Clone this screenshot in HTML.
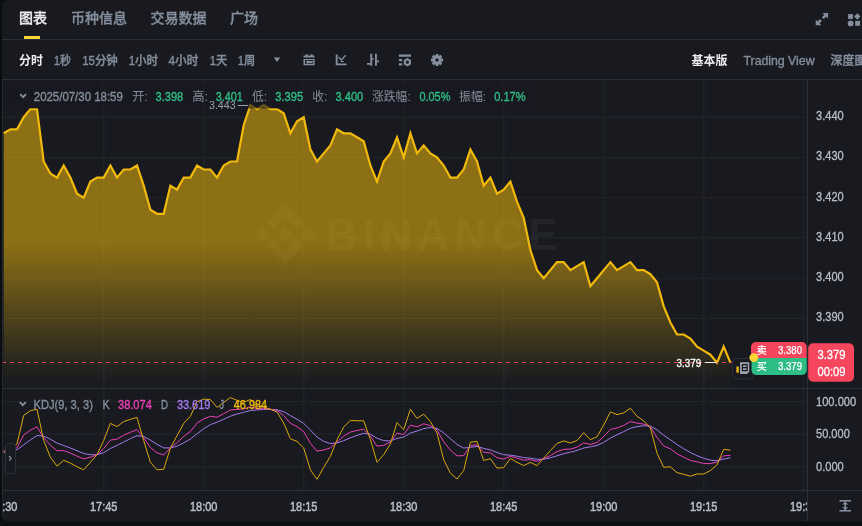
<!DOCTYPE html>
<html lang="zh-CN">
<head>
<meta charset="utf-8">
<title>图表</title>
<style>
html,body{margin:0;padding:0;background:#0b0e11;}
body{width:862px;height:526px;overflow:hidden;position:relative;}
svg{display:block;position:absolute;left:0;top:0;will-change:transform;}
text{font-family:"Liberation Sans","Noto Sans CJK SC",sans-serif;}
.t14{font-size:14px;font-weight:500;stroke-width:0.3px;}
.t14.w{stroke:#eaecef;}
.t14.g{stroke:#848e9c;}
.t12{font-size:12px;}
.m{font-weight:500;}
.sg{stroke:#848e9c;stroke-width:0.35px;}
.sgr{stroke:#2ebd85;stroke-width:0.35px;}
.b{font-weight:700;}
.g{fill:#848e9c;}
.w{fill:#eaecef;}
.gr{fill:#2ebd85;}
.ax{fill:#b7bdc6;font-size:12px;stroke:#b7bdc6;stroke-width:0.3px;}
</style>
</head>
<body>
<svg width="862" height="526" viewBox="0 0 862 526">
<defs>
<linearGradient id="af" x1="0" y1="100" x2="0" y2="380" gradientUnits="userSpaceOnUse">
<stop offset="0" stop-color="#f0b90b" stop-opacity="0.54"/>
<stop offset="0.51" stop-color="#f0b90b" stop-opacity="0.54"/>
<stop offset="1" stop-color="#f0b90b" stop-opacity="0.012"/>
</linearGradient>
<clipPath id="cp"><rect x="3" y="80" width="804" height="309"/></clipPath>
<clipPath id="cp2"><rect x="3" y="389" width="804" height="101"/></clipPath>
<clipPath id="cpt"><rect x="3" y="491" width="804" height="30"/></clipPath>
</defs>
<rect x="0" y="0" width="862" height="526" fill="#0b0e11"/>
<rect x="2" y="0" width="900" height="521.5" rx="6" fill="#181a20"/>
<!-- header borders -->
<rect x="2" y="39" width="860" height="1" fill="#2b3139"/>
<rect x="2" y="79" width="860" height="1" fill="#2b3139"/>
<!-- tabs -->
<text class="t14 w" x="19" y="22.7">图表</text>
<text class="t14 g" x="71" y="22.7">币种信息</text>
<text class="t14 g" x="150.5" y="22.7">交易数据</text>
<text class="t14 g" x="230" y="22.7">广场</text>
<rect x="24" y="36" width="16" height="3" fill="#fcd535"/>
<!-- header icons -->
<g fill="#848e9c">
<path d="M822.400 12.900h5.700v5.700l-1.900-1.900-2.400 2.400-1.900-1.900 2.400-2.400zM821.400 25.200h-5.700v-5.700l1.900 1.900 2.400-2.400 1.900 1.900-2.400 2.400z"/>
<rect x="848.100" y="14.100" width="4.800" height="4.900"/>
<path d="M857.300 13.300l3.200 3.200-3.200 3.200-3.200-3.200z"/>
<circle cx="850.600" cy="23.400" r="2.900"/>
<rect x="855.200" y="20.900" width="4.900" height="4.900"/>
</g>
<!-- interval row -->
<g class="t12 m" text-anchor="middle">
<text class="w b" x="31" y="65.4">分时</text>
<text class="g sg" x="62.4" y="65.4" textLength="17" lengthAdjust="spacingAndGlyphs">1秒</text>
<text class="g sg" x="100" y="65.4" textLength="35.6" lengthAdjust="spacingAndGlyphs">15分钟</text>
<text class="g sg" x="143.3" y="65.4" textLength="29.3" lengthAdjust="spacingAndGlyphs">1小时</text>
<text class="g sg" x="183.5" y="65.4" textLength="30" lengthAdjust="spacingAndGlyphs">4小时</text>
<text class="g sg" x="218.4" y="65.4" textLength="17.4" lengthAdjust="spacingAndGlyphs">1天</text>
<text class="g sg" x="246.5" y="65.4" textLength="17.4" lengthAdjust="spacingAndGlyphs">1周</text>
<text class="w b" x="709.4" y="65.4">基本版</text>
<text class="g sg" x="779" y="65.4" textLength="71" lengthAdjust="spacingAndGlyphs">Trading View</text>
<text class="g sg" x="848.4" y="65.4">深度图</text>
</g>
<path d="M273.800 57.500h6.400l-3.200 4.600z" fill="#848e9c"/>
<!-- toolbar icons -->
<g fill="#848e9c" id="tbicons">
<!-- icon1 -->
<path d="M305.6 54.3h2.1v1.4h-2.1zM310.6 54.3h2.1v1.4h-2.1zM303.5 55.6h11.1v2h-11.1z"/>
<path d="M303.5 59h11.100v6.200h-11.100zM305 60.100v3.600h8.100v-3.600z" fill-rule="evenodd"/>
<path d="M305.600 61.900l2.600-2v1h4.400v2h-4.400v1z"/>
<!-- icon2 -->
<path d="M335.700 54.500h1.900v9h8.800v1.800h-10.700z"/>
<path d="M338.500 57l2.900 3 4.200-4.700" fill="none" stroke="#848e9c" stroke-width="1.300"/>
<path d="M340.600 61h3.200v1h-3.200z"/>
<!-- icon3 -->
<path d="M370.300 53.700h1.900v12h-1.900zM375 53.700h1.900v12h-1.900zM367 63.100h3.400v1.700h-3.400zM376.800 60.500h2.300v1.700h-2.300zM372 58.300h1.600v1.700h-1.600z"/>
<!-- icon4 -->
<path d="M398.900 54.600h12.100v2.100h-12.100zM398.900 59.100h3.300v2.100h-3.300zM398.900 63.300h3.300v2.100h-3.300z"/>
<path d="M407.400 58l3.600 2.100v4.200l-3.600 2.100-3.600-2.100v-4.200zM407.400 60.500l-1.500 .9v1.700l1.500 .9 1.500-.9v-1.700z" fill-rule="evenodd"/>
</g>
<!-- gear -->
<g transform="translate(437 60)">
<g fill="#848e9c">
<rect x="-1.400" y="-6.100" width="2.800" height="12.200" rx="0.500"/>
<rect x="-1.400" y="-6.100" width="2.800" height="12.200" rx="0.500" transform="rotate(45)"/>
<rect x="-1.400" y="-6.100" width="2.800" height="12.200" rx="0.500" transform="rotate(90)"/>
<rect x="-1.400" y="-6.100" width="2.800" height="12.200" rx="0.500" transform="rotate(135)"/>
<circle r="4.800"/>
</g>
<path d="M0-2l2 2-2 2-2-2z" fill="#181a20"/>
</g>

<rect x="2" y="80" width="1" height="438" fill="#252a32"/>
<!-- grid -->
<g fill="#22262c">
<rect x="103.4" y="80" width="1" height="410"/>
<rect x="203.4" y="80" width="1" height="410"/>
<rect x="303.4" y="80" width="1" height="410"/>
<rect x="403.4" y="80" width="1" height="410"/>
<rect x="503.4" y="80" width="1" height="410"/>
<rect x="603.4" y="80" width="1" height="410"/>
<rect x="703.4" y="80" width="1" height="410"/>
<rect x="803.4" y="80" width="1" height="410"/>
<rect x="3" y="116.7" width="804" height="1"/>
<rect x="3" y="156.9" width="804" height="1"/>
<rect x="3" y="197.2" width="804" height="1"/>
<rect x="3" y="237.4" width="804" height="1"/>
<rect x="3" y="277.7" width="804" height="1"/>
<rect x="3" y="317.9" width="804" height="1"/>
<rect x="3" y="401.1" width="804" height="1"/>
<rect x="3" y="433.5" width="804" height="1"/>
<rect x="3" y="466.4" width="804" height="1"/>
</g>
<!-- watermark -->
<g opacity="0.045" fill="#ffffff">
<g transform="translate(254.700 203.400) scale(0.480 0.486)">
<polygon points="38.730 53.200 63.300 28.630 87.890 53.210 102.180 38.920 63.300 0 24.440 38.910"/>
<polygon points="14.290 49.010 28.580 63.300 14.290 77.590 0 63.300"/>
<polygon points="38.730 73.410 63.300 97.980 87.890 73.400 102.190 87.680 63.300 126.610 24.420 87.680"/>
<polygon points="112.320 49.010 126.610 63.300 112.320 77.590 98.030 63.300"/>
<polygon points="77.830 63.300 63.300 48.780 48.780 63.300 63.300 77.830"/>
</g>
<text x="325.800" y="250" font-size="44" font-weight="700" textLength="232" lengthAdjust="spacing">BINANCE</text>
</g>
<!-- area + line -->
<g clip-path="url(#cp)">
<path d="M3.7 133.3 L10.4 129.3 L17.0 129.3 L23.7 117.2 L30.4 109.1 L37.0 109.1 L43.7 161.5 L50.4 173.5 L57.0 177.6 L63.7 165.5 L70.4 177.6 L77.0 193.7 L83.7 197.7 L90.4 181.6 L97.0 177.6 L103.7 177.6 L110.4 165.5 L117.0 177.6 L123.7 169.5 L130.4 169.5 L137.0 165.5 L143.7 185.6 L150.4 209.8 L157.0 213.8 L163.7 213.8 L170.4 185.6 L177.0 189.6 L183.7 177.6 L190.4 177.6 L197.0 165.5 L203.7 169.5 L210.4 169.5 L217.0 177.6 L223.7 165.5 L230.4 161.5 L237.0 161.5 L243.7 125.2 L250.4 105.1 L257.0 109.1 L263.7 105.1 L270.4 109.1 L277.0 109.1 L283.7 113.2 L290.4 133.3 L297.0 121.2 L303.7 117.2 L310.4 149.4 L317.0 161.5 L323.7 153.4 L330.4 145.4 L337.0 129.3 L343.7 133.3 L350.4 133.3 L357.0 137.3 L363.7 141.3 L370.4 165.5 L377.0 181.6 L383.7 161.5 L390.4 153.4 L397.0 137.3 L403.7 157.4 L410.4 133.3 L417.0 153.4 L423.7 145.4 L430.4 153.4 L437.0 157.4 L443.7 165.5 L450.4 177.6 L457.0 177.6 L463.7 169.5 L470.4 149.4 L477.0 161.5 L483.7 185.6 L490.4 177.6 L497.0 193.7 L503.7 189.6 L510.4 181.6 L517.0 201.7 L523.7 217.8 L530.4 250.0 L537.0 270.1 L543.7 278.2 L550.4 270.1 L557.0 262.1 L563.7 262.1 L570.4 270.1 L577.0 266.1 L583.7 262.1 L590.4 286.2 L597.0 278.2 L603.7 270.1 L610.4 262.1 L617.0 270.1 L623.7 266.1 L630.4 262.1 L637.0 270.1 L643.7 270.1 L650.4 274.2 L657.0 282.2 L663.7 306.4 L670.4 322.5 L677.0 334.5 L683.7 334.5 L690.4 338.6 L697.0 346.6 L703.7 350.6 L710.4 354.7 L717.0 362.7 L723.7 346.6 L730.4 362.7 L730.4 388 L3.7 388 Z" fill="url(#af)"/>
<path d="M3.7 133.3 L10.4 129.3 L17.0 129.3 L23.7 117.2 L30.4 109.1 L37.0 109.1 L43.7 161.5 L50.4 173.5 L57.0 177.6 L63.7 165.5 L70.4 177.6 L77.0 193.7 L83.7 197.7 L90.4 181.6 L97.0 177.6 L103.7 177.6 L110.4 165.5 L117.0 177.6 L123.7 169.5 L130.4 169.5 L137.0 165.5 L143.7 185.6 L150.4 209.8 L157.0 213.8 L163.7 213.8 L170.4 185.6 L177.0 189.6 L183.7 177.6 L190.4 177.6 L197.0 165.5 L203.7 169.5 L210.4 169.5 L217.0 177.6 L223.7 165.5 L230.4 161.5 L237.0 161.5 L243.7 125.2 L250.4 105.1 L257.0 109.1 L263.7 105.1 L270.4 109.1 L277.0 109.1 L283.7 113.2 L290.4 133.3 L297.0 121.2 L303.7 117.2 L310.4 149.4 L317.0 161.5 L323.7 153.4 L330.4 145.4 L337.0 129.3 L343.7 133.3 L350.4 133.3 L357.0 137.3 L363.7 141.3 L370.4 165.5 L377.0 181.6 L383.7 161.5 L390.4 153.4 L397.0 137.3 L403.7 157.4 L410.4 133.3 L417.0 153.4 L423.7 145.4 L430.4 153.4 L437.0 157.4 L443.7 165.5 L450.4 177.6 L457.0 177.6 L463.7 169.5 L470.4 149.4 L477.0 161.5 L483.7 185.6 L490.4 177.6 L497.0 193.7 L503.7 189.6 L510.4 181.6 L517.0 201.7 L523.7 217.8 L530.4 250.0 L537.0 270.1 L543.7 278.2 L550.4 270.1 L557.0 262.1 L563.7 262.1 L570.4 270.1 L577.0 266.1 L583.7 262.1 L590.4 286.2 L597.0 278.2 L603.7 270.1 L610.4 262.1 L617.0 270.1 L623.7 266.1 L630.4 262.1 L637.0 270.1 L643.7 270.1 L650.4 274.2 L657.0 282.2 L663.7 306.4 L670.4 322.5 L677.0 334.5 L683.7 334.5 L690.4 338.6 L697.0 346.6 L703.7 350.6 L710.4 354.7 L717.0 362.7 L723.7 346.6 L730.4 362.7" fill="none" stroke="#f0b90b" stroke-width="2.2" stroke-linejoin="miter" stroke-miterlimit="10"/>
</g>
<!-- legend overlay -->
<rect x="5" y="83" width="527" height="25.5" fill="#181a20" fill-opacity="0.62"/>
<!-- high marker -->
<text x="209" y="108.5" font-size="10" fill="#9aa1ab" textLength="26.6" lengthAdjust="spacingAndGlyphs">3.443</text>
<rect x="237.7" y="105" width="10.6" height="1" fill="#9aa1ab"/>
<!-- legend text -->
<path d="M20.200 94.200l2.900 2.900 2.900-2.900" fill="none" stroke="#848e9c" stroke-width="1.900"/>
<g class="t12">
<text class="g sg" x="33.8" y="100.8" textLength="89" lengthAdjust="spacingAndGlyphs">2025/07/30 18:59</text>
<text class="g" x="132.3" y="100.8" textLength="15.7" lengthAdjust="spacingAndGlyphs">开:</text>
<text class="gr sgr" x="155.6" y="100.8" textLength="27.6" lengthAdjust="spacingAndGlyphs">3.398</text>
<text class="g" x="192.3" y="100.8" textLength="15.7" lengthAdjust="spacingAndGlyphs">高:</text>
<text class="gr sgr" x="215.7" y="100.8" textLength="27" lengthAdjust="spacingAndGlyphs">3.401</text>
<text class="g" x="252" y="100.8" textLength="15" lengthAdjust="spacingAndGlyphs">低:</text>
<text class="gr sgr" x="275.3" y="100.8" textLength="27.8" lengthAdjust="spacingAndGlyphs">3.395</text>
<text class="g" x="312.2" y="100.8" textLength="15" lengthAdjust="spacingAndGlyphs">收:</text>
<text class="gr sgr" x="335.5" y="100.8" textLength="27.8" lengthAdjust="spacingAndGlyphs">3.400</text>
<text class="g" x="372" y="100.8" textLength="38.7" lengthAdjust="spacingAndGlyphs">涨跌幅:</text>
<text class="gr sgr" x="419.4" y="100.8" textLength="31" lengthAdjust="spacingAndGlyphs">0.05%</text>
<text class="g" x="459" y="100.8" textLength="27.2" lengthAdjust="spacingAndGlyphs">振幅:</text>
<text class="gr sgr" x="494.2" y="100.8" textLength="31.3" lengthAdjust="spacingAndGlyphs">0.17%</text>
</g>
<!-- current price dashed line -->
<path d="M3 362.5H807" stroke="#f6465d" stroke-width="1.100" stroke-dasharray="4 4" stroke-dashoffset="1.100" fill="none"/>
<!-- low marker -->
<text x="676.5" y="366.7" font-size="10" fill="#ffffff" stroke="#ffffff" stroke-width="0.300" textLength="24.7" lengthAdjust="spacingAndGlyphs">3.379</text>
<rect x="704.7" y="362" width="11.8" height="1" fill="#eaecef"/>
<!-- small button -->
<rect x="732.5" y="358.5" width="20.5" height="20.5" rx="4" fill="#181a20" stroke="#2b3139" stroke-width="1"/>
<path d="M740 362.300h9.300v9.400l-2.300 2.300h-7z" fill="#9aa1ab"/>
<path d="M742.400 364.600h4.700v6h-4.700zM742.400 367.600h4.700" fill="none" stroke="#181a20" stroke-width="1.200"/>
<rect x="736.400" y="366.500" width="2.400" height="6.200" fill="#f0b90b"/>
<!-- pane divider & axes -->
<rect x="3" y="388" width="859" height="1" fill="#2b3139"/>
<rect x="3" y="490" width="859" height="1" fill="#2b3139"/>
<rect x="807" y="80" width="1" height="441" fill="#2b3139"/>
<!-- sell / buy labels -->
<path d="M756 342h46a4.700 4.700 0 0 1 4.700 4.700v11.300h-55.700v-11a5 5 0 0 1 5-5z" fill="#f6465d"/>
<path d="M751.500 358h55.200v12.300a4.700 4.700 0 0 1 -4.700 4.700h-45.800a4.700 4.700 0 0 1 -4.700-4.700z" fill="#2ebd85"/>
<g font-size="10" fill="#ffffff" stroke="#ffffff" stroke-width="0.250">
<text x="756.8" y="354">卖</text>
<text x="778" y="353.8" textLength="24" lengthAdjust="spacingAndGlyphs">3.380</text>
<text x="756.8" y="370.4">买</text>
<text x="778" y="370.2" textLength="24" lengthAdjust="spacingAndGlyphs">3.379</text>
</g>
<circle cx="753.8" cy="357.6" r="4.4" fill="#fcd535"/>
<!-- price tag -->
<rect x="808.200" y="343.200" width="45.800" height="38.600" rx="5" fill="#f6465d"/>
<g font-size="12" fill="#ffffff" text-anchor="middle" stroke="#ffffff" stroke-width="0.300">
<text x="831.5" y="359" textLength="28" lengthAdjust="spacingAndGlyphs">3.379</text>
<text x="831.5" y="375.6" textLength="28" lengthAdjust="spacingAndGlyphs">00:09</text>
</g>
<!-- price axis labels -->
<g class="ax">
<text x="816" y="120.2" textLength="27.7" lengthAdjust="spacingAndGlyphs">3.440</text>
<text x="816" y="160.4" textLength="27.7" lengthAdjust="spacingAndGlyphs">3.430</text>
<text x="816" y="200.700" textLength="27.7" lengthAdjust="spacingAndGlyphs">3.420</text>
<text x="816" y="240.900" textLength="27.7" lengthAdjust="spacingAndGlyphs">3.410</text>
<text x="816" y="281.100" textLength="27.7" lengthAdjust="spacingAndGlyphs">3.400</text>
<text x="816" y="321.400" textLength="27.7" lengthAdjust="spacingAndGlyphs">3.390</text>
<text x="816" y="406" textLength="40.2" lengthAdjust="spacingAndGlyphs">100.000</text>
<text x="816" y="438" textLength="33.8" lengthAdjust="spacingAndGlyphs">50.000</text>
<text x="816" y="471.2" textLength="27.800" lengthAdjust="spacingAndGlyphs">0.000</text>
</g>
<!-- KDJ lines -->
<g clip-path="url(#cp2)" fill="none" stroke-width="1" stroke-linejoin="round">
<path d="M3.7 451.0 L10.4 450.5 L17.0 449.7 L23.7 444.8 L30.4 439.9 L37.0 435.5 L43.7 436.2 L50.4 439.2 L57.0 443.1 L63.7 445.5 L70.4 448.0 L77.0 450.7 L83.7 453.5 L90.4 454.7 L97.0 454.7 L103.7 452.7 L110.4 448.5 L117.0 445.4 L123.7 442.0 L130.4 438.7 L137.0 435.7 L143.7 436.4 L150.4 440.1 L157.0 444.3 L163.7 447.9 L170.4 447.9 L177.0 446.2 L183.7 442.9 L190.4 439.1 L197.0 433.8 L203.7 428.8 L210.4 424.6 L217.0 422.2 L223.7 419.3 L230.4 416.2 L237.0 414.0 L243.7 412.3 L250.4 410.5 L257.0 409.9 L263.7 409.5 L270.4 409.4 L277.0 409.8 L283.7 411.7 L290.4 415.6 L297.0 419.3 L303.7 423.4 L310.4 430.0 L317.0 437.0 L323.7 441.4 L330.4 443.5 L337.0 443.0 L343.7 440.7 L350.4 437.8 L357.0 435.4 L363.7 433.3 L370.4 434.2 L377.0 438.2 L383.7 440.6 L390.4 441.0 L397.0 438.4 L403.7 437.1 L410.4 433.1 L417.0 431.0 L423.7 428.6 L430.4 427.6 L437.0 428.4 L443.7 432.9 L450.4 438.6 L457.0 444.4 L463.7 448.1 L470.4 447.3 L477.0 446.4 L483.7 448.4 L490.4 449.9 L497.0 452.5 L503.7 454.7 L510.4 455.2 L517.0 456.2 L523.7 457.6 L530.4 458.2 L537.0 459.3 L543.7 459.1 L550.4 457.9 L557.0 455.8 L563.7 453.7 L570.4 452.2 L577.0 450.5 L583.7 448.0 L590.4 446.8 L597.0 445.4 L603.7 442.4 L610.4 438.1 L617.0 434.7 L623.7 431.6 L630.4 428.3 L637.0 426.6 L643.7 425.7 L650.4 426.1 L657.0 429.9 L663.7 435.3 L670.4 439.8 L677.0 444.5 L683.7 448.7 L690.4 452.6 L697.0 455.7 L703.7 458.3 L710.4 460.1 L717.0 460.7 L723.7 459.1 L730.4 457.8" stroke="#a27aeb"/>
<path d="M3.7 450.8 L10.4 449.0 L17.0 447.8 L23.7 435.0 L30.4 430.2 L37.0 426.8 L43.7 437.7 L50.4 445.2 L57.0 450.8 L63.7 450.5 L70.4 453.1 L77.0 456.1 L83.7 458.9 L90.4 457.2 L97.0 454.7 L103.7 448.6 L110.4 440.1 L117.0 439.1 L123.7 435.2 L130.4 432.3 L137.0 429.6 L143.7 437.7 L150.4 447.5 L157.0 452.8 L163.7 455.0 L170.4 447.9 L177.0 442.7 L183.7 436.4 L190.4 431.5 L197.0 423.1 L203.7 418.9 L210.4 416.3 L217.0 417.2 L223.7 413.7 L230.4 410.0 L237.0 409.4 L243.7 409.0 L250.4 406.8 L257.0 408.6 L263.7 408.6 L270.4 409.3 L277.0 410.6 L283.7 415.5 L290.4 423.3 L297.0 426.6 L303.7 431.6 L310.4 443.3 L317.0 451.1 L323.7 450.0 L330.4 447.8 L337.0 441.9 L343.7 436.2 L350.4 432.0 L357.0 430.5 L363.7 429.1 L370.4 436.0 L377.0 446.2 L383.7 445.3 L390.4 442.0 L397.0 433.1 L403.7 434.6 L410.4 425.2 L417.0 426.8 L423.7 423.8 L430.4 425.6 L437.0 429.9 L443.7 441.8 L450.4 450.1 L457.0 455.9 L463.7 455.6 L470.4 445.6 L477.0 444.8 L483.7 452.4 L490.4 452.8 L497.0 457.7 L503.7 459.0 L510.4 456.3 L517.0 458.2 L523.7 460.2 L530.4 459.6 L537.0 461.4 L543.7 458.8 L550.4 455.5 L557.0 451.7 L563.7 449.4 L570.4 449.1 L577.0 447.2 L583.7 442.9 L590.4 444.4 L597.0 442.5 L603.7 436.6 L610.4 429.4 L617.0 428.0 L623.7 425.4 L630.4 421.6 L637.0 423.1 L643.7 424.1 L650.4 426.7 L657.0 437.6 L663.7 445.9 L670.4 448.8 L677.0 453.8 L683.7 457.2 L690.4 460.5 L697.0 461.8 L703.7 463.5 L710.4 463.6 L717.0 462.1 L723.7 455.9 L730.4 455.3" stroke="#eb40b5"/>
<path d="M3.7 452.5 L10.4 450.0 L17.0 443.9 L23.7 415.4 L30.4 410.7 L37.0 409.2 L43.7 440.5 L50.4 457.2 L57.0 466.1 L63.7 460.3 L70.4 463.1 L77.0 466.8 L83.7 469.8 L90.4 462.3 L97.0 454.7 L103.7 440.5 L110.4 423.3 L117.0 426.6 L123.7 421.6 L130.4 419.3 L137.0 417.4 L143.7 440.5 L150.4 462.3 L157.0 469.8 L163.7 469.3 L170.4 448.0 L177.0 435.8 L183.7 423.3 L190.4 416.3 L197.0 401.7 L203.7 399.2 L210.4 399.5 L217.0 407.4 L223.7 402.4 L230.4 397.5 L237.0 400.4 L243.7 402.4 L250.4 399.5 L257.0 406.2 L263.7 407.0 L270.4 409.2 L277.0 412.1 L283.7 423.0 L290.4 438.8 L297.0 441.4 L303.7 448.0 L310.4 469.8 L317.0 479.3 L323.7 467.3 L330.4 456.4 L337.0 439.7 L343.7 427.1 L350.4 420.4 L357.0 420.8 L363.7 420.8 L370.4 439.5 L377.0 462.3 L383.7 454.7 L390.4 443.9 L397.0 422.6 L403.7 429.6 L410.4 409.2 L417.0 418.4 L423.7 414.1 L430.4 421.6 L437.0 433.0 L443.7 459.8 L450.4 473.1 L457.0 479.0 L463.7 470.6 L470.4 442.2 L477.0 441.4 L483.7 460.4 L490.4 458.7 L497.0 468.1 L503.7 467.6 L510.4 458.4 L517.0 462.3 L523.7 465.6 L530.4 462.3 L537.0 465.6 L543.7 458.1 L550.4 450.6 L557.0 443.5 L563.7 440.9 L570.4 443.0 L577.0 440.5 L583.7 432.7 L590.4 439.7 L597.0 436.8 L603.7 425.0 L610.4 411.9 L617.0 414.6 L623.7 412.9 L630.4 408.2 L637.0 416.3 L643.7 420.8 L650.4 428.0 L657.0 453.1 L663.7 467.3 L670.4 466.8 L677.0 472.6 L683.7 474.3 L690.4 476.2 L697.0 474.0 L703.7 474.0 L710.4 470.6 L717.0 464.8 L723.7 449.4 L730.4 450.2" stroke="#dba80b"/>
</g>
<!-- KDJ legend -->
<path d="M19.800 402.200l3 3 3-3" fill="none" stroke="#848e9c" stroke-width="1.900"/>
<g class="t12">
<text class="g sg" x="33.5" y="409" textLength="59.4" lengthAdjust="spacingAndGlyphs">KDJ(9, 3, 3)</text>
<text class="g sg" x="102.400" y="409" textLength="7.2" lengthAdjust="spacingAndGlyphs">K</text>
<text fill="#eb40b5" stroke="#eb40b5" stroke-width="0.350" x="118" y="409" textLength="33.8" lengthAdjust="spacingAndGlyphs">38.074</text>
<text class="g sg" x="161" y="409" textLength="7" lengthAdjust="spacingAndGlyphs">D</text>
<text fill="#a27aeb" stroke="#a27aeb" stroke-width="0.350" x="176.900" y="409" textLength="33.4" lengthAdjust="spacingAndGlyphs">33.619</text>
<text class="g sg" x="219.600" y="409" textLength="4.6" lengthAdjust="spacingAndGlyphs">J</text>
<text fill="#f0b90b" stroke="#f0b90b" stroke-width="0.350" x="233.800" y="409" textLength="33.3" lengthAdjust="spacingAndGlyphs">46.984</text>
</g>
<!-- left collapse button -->
<rect x="5.500" y="443.500" width="10" height="30" rx="3" fill="#181a20" stroke="#2b3139"/>
<path d="M9 456l2.200 2.300-2.200 2.300" fill="none" stroke="#848e9c" stroke-width="1.2"/>
<!-- time labels -->
<g class="ax m" text-anchor="middle" clip-path="url(#cpt)" style="stroke-width:0.5px">
<text x="3.700" y="510.800" textLength="27.5" lengthAdjust="spacingAndGlyphs">17:30</text>
<text x="103.700" y="510.800" textLength="27.5" lengthAdjust="spacingAndGlyphs">17:45</text>
<text x="203.700" y="510.800" textLength="27.5" lengthAdjust="spacingAndGlyphs">18:00</text>
<text x="303.700" y="510.800" textLength="27.5" lengthAdjust="spacingAndGlyphs">18:15</text>
<text x="403.700" y="510.800" textLength="27.5" lengthAdjust="spacingAndGlyphs">18:30</text>
<text x="503.700" y="510.800" textLength="27.5" lengthAdjust="spacingAndGlyphs">18:45</text>
<text x="603.700" y="510.800" textLength="27.5" lengthAdjust="spacingAndGlyphs">19:00</text>
<text x="703.700" y="510.800" textLength="27.5" lengthAdjust="spacingAndGlyphs">19:15</text>
<text x="803.700" y="510.800" textLength="27.5" lengthAdjust="spacingAndGlyphs">19:30</text>
</g>
<!-- bottom-right icon -->
<g fill="#848e9c">
<rect x="839.500" y="500" width="11.500" height="1.600"/>
<rect x="839.500" y="510" width="11.500" height="1.600"/>
<rect x="844.500" y="501.600" width="1.500" height="8.400"/>
<path d="M842.200 504.500l3-2.800 3 2.800zM842.200 507.200l3 2.800 3-2.800z"/>
</g>
</svg>
</body>
</html>
